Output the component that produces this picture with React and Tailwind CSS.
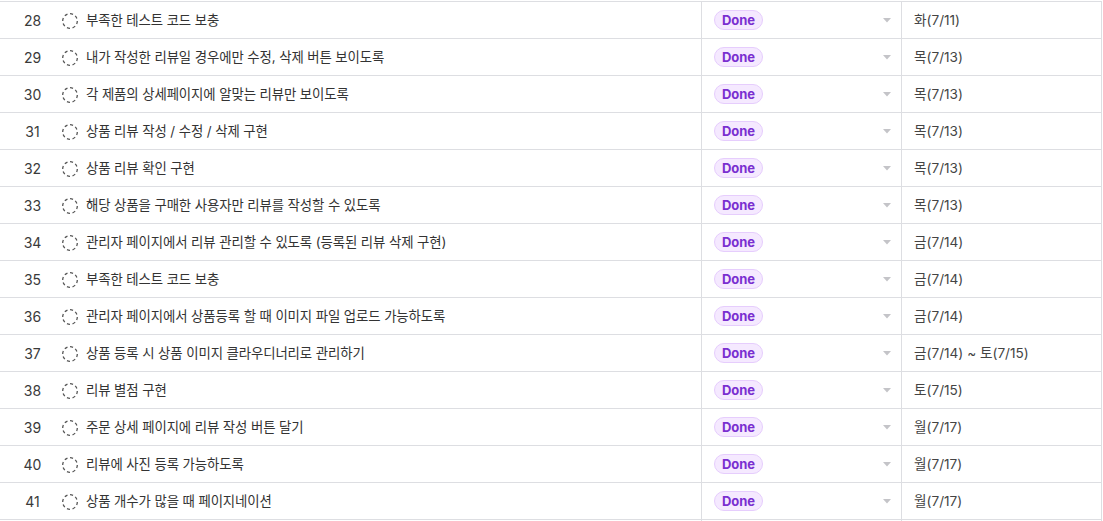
const rows = [
  [28, '부족한 테스트 코드 보충', '화(7/11)'],
  [29, '내가 작성한 리뷰일 경우에만 수정, 삭제 버튼 보이도록', '목(7/13)'],
  [30, '각 제품의 상세페이지에 알맞는 리뷰만 보이도록', '목(7/13)'],
  [31, '상품 리뷰 작성 / 수정 / 삭제 구현', '목(7/13)'],
  [32, '상품 리뷰 확인 구현', '목(7/13)'],
  [33, '해당 상품을 구매한 사용자만 리뷰를 작성할 수 있도록', '목(7/13)'],
  [34, '관리자 페이지에서 리뷰 관리할 수 있도록 (등록된 리뷰 삭제 구현)', '금(7/14)'],
  [35, '부족한 테스트 코드 보충', '금(7/14)'],
  [36, '관리자 페이지에서 상품등록 할 때 이미지 파일 업로드 가능하도록', '금(7/14)'],
  [37, '상품 등록 시 상품 이미지 클라우디너리로 관리하기', '금(7/14) ~ 토(7/15)'],
  [38, '리뷰 별점 구현', '토(7/15)'],
  [39, '주문 상세 페이지에 리뷰 작성 버튼 달기', '월(7/17)'],
  [40, '리뷰에 사진 등록 가능하도록', '월(7/17)'],
  [41, '상품 개수가 많을 때 페이지네이션', '월(7/17)'],
]

// dashed "not started" circle
function DashedCircle() {
  return (
    <svg width="18" height="18" viewBox="0 0 18 18" className="flex-shrink-0">
      <circle cx="9" cy="9" r="7.3" fill="none" stroke="#555" strokeWidth="1.3" strokeDasharray="3.1 2.6" />
    </svg>
  )
}

function Row({ num, title, date }) {
  return (
    <div className="flex h-[37px] border-b border-[#dddee2]">
      {/* Title cell */}
      <div className="w-[702px] flex items-center pt-px border-r border-[#dddee2]">
        <span className="ml-[9px] w-[47px] text-center text-[14px] text-[#3a3a3a]">{num}</span>
        <span className="ml-[5px]"><DashedCircle /></span>
        <span className="ml-[7px] text-[13.4px] tracking-[-0.1px] text-[#333] whitespace-nowrap">{title}</span>
      </div>

      {/* Status cell */}
      <div className="w-[200px] flex items-center justify-between pl-[12px] pr-[10px] border-r border-[#dddee2]">
        <span className="h-[20px] w-[49px] flex items-center justify-center rounded-full bg-[#f5e9ff] border border-[#e6cdfd] text-[13px] font-bold text-[#7a2fd0] leading-none">
          Done
        </span>
        <svg width="8" height="5" viewBox="0 0 8 5">
          <path d="M0 0 L8 0 L4 4.5 Z" fill="#c4c4c8" />
        </svg>
      </div>

      {/* Date cell */}
      <div className="w-[200px] flex items-center pt-px pl-[12px] border-r border-[#dddee2]">
        <span className="text-[13.6px] text-[#444] whitespace-nowrap">{date}</span>
      </div>
    </div>
  )
}

export default function App() {
  return (
    <div
      className="w-[1103px] h-[521px] bg-white overflow-hidden pt-px"
      style={{ fontFamily: 'Inter, "Noto Sans CJK KR", sans-serif' }}
    >
      <div className="w-[1102px] border-t border-[#dddee2]">
        {rows.map(([num, title, date]) => (
          <Row key={num} num={num} title={title} date={date} />
        ))}
        <div className="flex h-[10px]">
          <div className="w-[702px] border-r border-[#dddee2]" />
          <div className="w-[200px] border-r border-[#dddee2]" />
          <div className="w-[200px] border-r border-[#dddee2]" />
        </div>
      </div>
    </div>
  )
}
